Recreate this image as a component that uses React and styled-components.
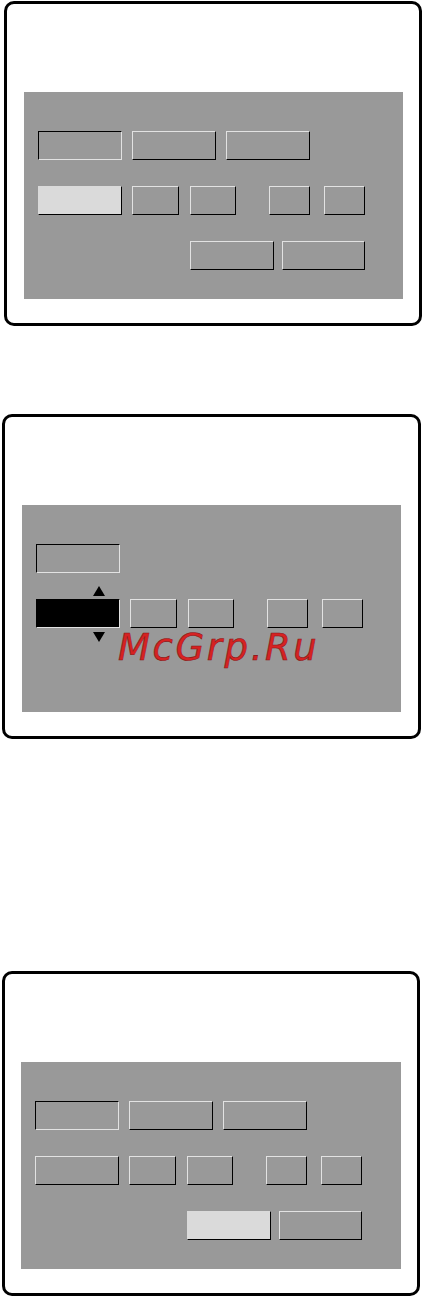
import React from 'react';
import styled, { createGlobalStyle } from 'styled-components';

const Global = createGlobalStyle`
  html, body {
    margin: 0;
    padding: 0;
    background: #fff;
    font-family: "DejaVu Sans", sans-serif;
  }
`;

const Page = styled.div`
  width: 423px;
  height: 1296px;
  display: flex;
  flex-direction: column;
  overflow: hidden;
`;

const Screen = styled.div`
  box-sizing: border-box;
  width: ${p => p.$w}px;
  height: 325px;
  margin-top: ${p => p.$top}px;
  margin-left: ${p => p.$left}px;
  border: 3px solid #000;
  border-radius: 10px;
  padding: 88px ${p => p.$pr}px 24px ${p => p.$pl}px;
  display: flex;
`;

const Display = styled.div`
  position: relative;
  flex: 1;
  background: #999999;
  padding: 39px 0 0 14px;
  display: flex;
  flex-direction: column;
  gap: 26px;
`;

const Row = styled.div`
  display: flex;
  height: 29px;
`;

const Btn = styled.div`
  position: relative;
  box-sizing: border-box;
  width: ${p => p.$w}px;
  height: 29px;
  margin-left: ${p => p.$gap || 0}px;
  border: 1.5px solid;
  background: ${p => (p.$fill === 'light' ? '#dadada' : p.$fill === 'dark' ? '#000' : 'transparent')};
  border-color: ${p =>
    p.$sunk
      ? '#000 #e2e2e2 #e2e2e2 #000'
      : p.$fill === 'light'
      ? '#dadada #000 #000 #dadada'
      : '#e2e2e2 #000 #000 #e2e2e2'};
`;

const Arrow = styled.div`
  position: absolute;
  left: 56px;
  width: 0;
  height: 0;
  border-left: 6px solid transparent;
  border-right: 6px solid transparent;
  ${p =>
    p.$up
      ? 'top: -14px; border-bottom: 10px solid #000;'
      : 'bottom: -15px; border-top: 10px solid #000;'}
`;

const Mark = styled.div`
  position: absolute;
  left: 96px;
  top: 124px;
  font-family: "DejaVu Sans", sans-serif;
  font-style: oblique;
  font-size: 37px;
  line-height: 37px;
  letter-spacing: 2.6px;
  color: #d62222;
  -webkit-text-stroke: 0.6px #8a1515;
  white-space: nowrap;
`;

const TopRow = ({ sunkFirst = true }) => (
  <Row>
    <Btn $w={84} $sunk={sunkFirst} />
    <Btn $w={84} $gap={10} />
    <Btn $w={84} $gap={10} />
  </Row>
);

const MidRow = ({ first }) => (
  <Row>
    {first}
    <Btn $w={47} $gap={10} />
    <Btn $w={46} $gap={11} />
    <Btn $w={41} $gap={33} />
    <Btn $w={41} $gap={14} />
  </Row>
);

const BottomRow = ({ lightFirst }) => (
  <Row>
    <Btn $w={84} $gap={152} $fill={lightFirst ? 'light' : undefined} />
    <Btn $w={83} $gap={8} />
  </Row>
);

export default function App() {
  return (
    <Page>
      <Global />
      <Screen $w={418} $top={1} $left={4} $pl={17} $pr={16}>
        <Display>
          <TopRow />
          <MidRow first={<Btn $w={84} $fill="light" />} />
          <BottomRow />
        </Display>
      </Screen>

      <Screen $w={419} $top={88} $left={2} $pl={17} $pr={17}>
        <Display>
          <Row>
            <Btn $w={84} $sunk />
          </Row>
          <MidRow
            first={
              <Btn $w={84} $fill="dark" $sunk>
                <Arrow $up />
                <Arrow />
              </Btn>
            }
          />
          <Mark>McGrp.Ru</Mark>
        </Display>
      </Screen>

      <Screen $w={418} $top={232} $left={2} $pl={16} $pr={16}>
        <Display>
          <TopRow />
          <MidRow first={<Btn $w={84} />} />
          <BottomRow lightFirst />
        </Display>
      </Screen>
    </Page>
  );
}
